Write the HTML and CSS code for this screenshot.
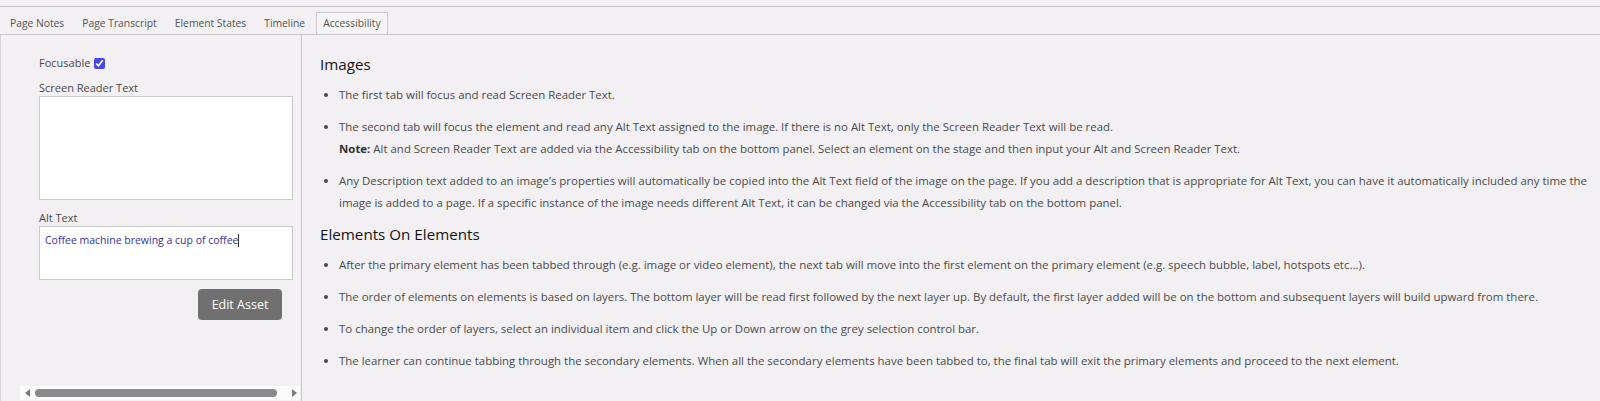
FILE: index.html
```html
<!DOCTYPE html>
<html>
<head>
    <title>Accessibility</title>
    <link rel="stylesheet" href="styles.css">
</head>
<body>
    <div class="topline"></div>

    <div class="tabs">
        <span class="tab">Page Notes</span>
        <span class="tab">Page Transcript</span>
        <span class="tab">Element States</span>
        <span class="tab">Timeline</span>
        <span class="tab active">Accessibility</span>
    </div>

    <div class="main">
        <div class="side">
            <div class="focus-row">
                <label>Focusable</label>
                <input type="checkbox" checked>
            </div>

            <label class="field-label">Screen Reader Text</label>
            <div class="box tall"></div>

            <label class="field-label alt">Alt Text</label>
            <div class="box short">Coffee machine brewing a cup of coffee<span class="caret"></span></div>

            <div class="btn-row">
                <button>Edit Asset</button>
            </div>

            <!-- horizontal scroll bar -->
            <div class="hscroll">
                <span class="arrow left"></span>
                <span class="thumb"></span>
                <span class="arrow right"></span>
            </div>
        </div>

        <div class="content">
            <h3>Images</h3>
            <ul>
                <li>The first tab will focus and read Screen Reader Text.</li>
                <li>The second tab will focus the element and read any Alt Text assigned to the image. If there is no Alt Text, only the Screen Reader Text will be read.<br>
                    <b>Note:</b> Alt and Screen Reader Text are added via the Accessibility tab on the bottom panel. Select an element on the stage and then input your Alt and Screen Reader Text.</li>
                <li>Any Description text added to an image’s properties will automatically be copied into the Alt Text field of the image on the page. If you add a description that is appropriate for Alt Text, you can have it automatically included any time the image is added to a page. If a specific instance of the image needs different Alt Text, it can be changed via the Accessibility tab on the bottom panel.</li>
            </ul>

            <h3 class="second">Elements On Elements</h3>
            <ul>
                <li>After the primary element has been tabbed through (e.g. image or video element), the next tab will move into the first element on the primary element (e.g. speech bubble, label, hotspots etc...).</li>
                <li>The order of elements on elements is based on layers. The bottom layer will be read first followed by the next layer up. By default, the first layer added will be on the bottom and subsequent layers will build upward from there.</li>
                <li>To change the order of layers, select an individual item and click the Up or Down arrow on the grey selection control bar.</li>
                <li>The learner can continue tabbing through the secondary elements. When all the secondary elements have been tabbed to, the final tab will exit the primary elements and proceed to the next element.</li>
            </ul>
        </div>
    </div>
</body>
</html>
```

FILE: styles.css
```css
body {
    margin: 0;
    height: 401px;
    display: flex;
    flex-direction: column;
    background: #f2f0f3;
    font-family: "Open Sans", sans-serif;
    color: #4a4a4a;
    overflow: hidden;
}
.topline {
    height: 6px;
    border-bottom: 1px solid #c8c6c9;
}
.tabs {
    height: 27px;
    display: flex;
    align-items: flex-end;
    padding-left: 3px;
    gap: 4px;
    border-bottom: 1px solid #c8c6c9;
}
.tab {
    padding: 0 6px;
    height: 21px;
    line-height: 21px;
    font-size: 10.3px;
    color: #555;
    border: 1px solid transparent;
    border-bottom: none;
}
.tab.active {
    border-color: #cbc9cc;
    background: #f5f4f6;
}
.main {
    flex: 1;
    display: grid;
    grid-template-columns: 302px 1fr;
}
.side {
    display: flex;
    flex-direction: column;
    padding-left: 38px;
    padding-right: 8px;
    border-left: 1px solid #d6d4d7;
    border-right: 1px solid #c8c6c9;
}
.focus-row {
    display: flex;
    align-items: center;
    gap: 4px;
    margin-top: 21px;
    font-size: 11px;
    line-height: 14px;
}
.focus-row input {
    width: 11px;
    height: 11px;
    margin: 0;
    accent-color: #4747ef;
}
.field-label {
    font-size: 11px;
    line-height: 14px;
    margin-top: 11px;
}
.field-label.alt {
    margin-top: 11px;
}
.box {
    margin-top: 1px;
    background: #fff;
    border: 1px solid #c9c9cc;
    box-sizing: border-box;
    font-size: 10.5px;
    line-height: 14px;
    padding: 6px 5px;
    color: #3a2f94;
}
.box.tall {
    height: 104px;
}
.box.short {
    height: 54px;
}
.caret {
    display: inline-block;
    width: 1px;
    height: 13px;
    background: #333;
    vertical-align: -3px;
}
.btn-row {
    display: flex;
    justify-content: flex-end;
    padding-right: 11px;
    margin-top: 9px;
}
button {
    width: 84px;
    height: 31px;
    border: none;
    border-radius: 4px;
    background: #717071;
    color: #fff;
    font-family: "Open Sans", sans-serif;
    font-size: 12.5px;
    padding: 0;
}
.hscroll {
    margin-top: auto;
    margin-left: -19px;
    margin-right: -7px;
    margin-bottom: 1px;
    height: 14px;
    background: #fbfbfc;
    display: flex;
    align-items: center;
    padding: 0 3px 0 5px;
    gap: 5px;
}
.thumb {
    flex: 1;
    height: 8px;
    border-radius: 4px;
    background: #8a898b;
}
.arrow {
    width: 0;
    height: 0;
    border-top: 4px solid transparent;
    border-bottom: 4px solid transparent;
}
.arrow.left {
    border-right: 5px solid #7c7b7d;
}
.arrow.right {
    border-left: 5px solid #7c7b7d;
    margin-left: 10px;
}
.content {
    padding: 19px 0 0 18px;
}
h3 {
    margin: 0;
    font-size: 15.2px;
    line-height: 20px;
    font-weight: 400;
    color: #151515;
}
h3.second {
    margin-top: 2px;
}
ul {
    margin: 10px 0 0;
    padding-left: 19px;
    font-size: 11.45px;
    line-height: 22px;
}
li {
    margin-bottom: 10px;
}
b {
    font-weight: 700;
    color: #333;
}
```
